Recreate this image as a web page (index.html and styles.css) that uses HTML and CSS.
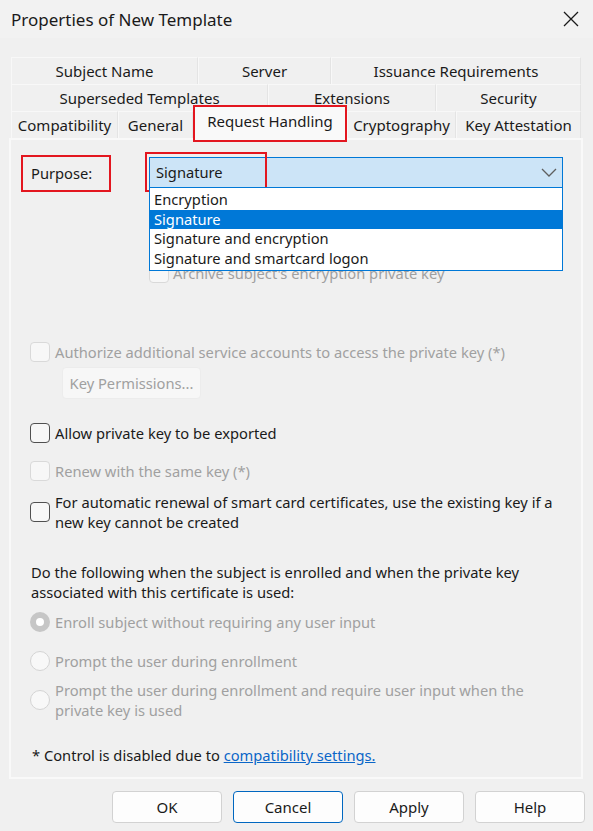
FILE: index.html
```html
<!DOCTYPE html>
<html>
<head>
<meta charset="utf-8">
<title>Properties of New Template</title>
<link rel="stylesheet" href="styles.css">
</head>
<body>
<div class="window">
  <div class="titlebar">
    <span class="title">Properties of New Template</span>
    <svg class="close" width="16" height="16" viewBox="0 0 16 16"><path d="M1 1 L15 15 M15 1 L1 15" stroke="#1a1a1a" stroke-width="1.3" fill="none"/></svg>
  </div>
  <div class="main">
    <div class="tabs">
      <div class="tabrow">
        <div class="tab t-subject">Subject Name</div>
        <div class="tab t-server">Server</div>
        <div class="tab t-issuance">Issuance Requirements</div>
      </div>
      <div class="tabrow">
        <div class="tab t-superseded">Superseded Templates</div>
        <div class="tab t-extensions">Extensions</div>
        <div class="tab t-security">Security</div>
      </div>
      <div class="tabrow">
        <div class="tab t-compat">Compatibility</div>
        <div class="tab t-general">General</div>
        <div class="tab tab-active t-request">Request Handling</div>
        <div class="tab t-crypto">Cryptography</div>
        <div class="tab t-attest">Key Attestation</div>
      </div>
    </div>
    <div class="panel">
      <div class="purpose-row">
        <div class="purpose-label">Purpose:</div>
        <div class="combo">
          <span class="combo-value">Signature</span>
          <svg class="chevron" width="16" height="9" viewBox="0 0 16 9"><path d="M1 1 L8 8 L15 1" stroke="#5f5f5f" stroke-width="1.3" fill="none"/></svg>
          <div class="annot-box"></div>
          <ul class="dropdown">
            <li>Encryption</li>
            <li class="selected">Signature</li>
            <li>Signature and encryption</li>
            <li>Signature and smartcard logon</li>
          </ul>
        </div>
      </div>

      <div class="check-row archive disabled">
        <span class="box"></span>
        <span class="label">Archive subject's encryption private key</span>
      </div>

      <div class="check-row authorize disabled">
        <span class="box"></span>
        <span class="label">Authorize additional service accounts to access the private key (*)</span>
      </div>
      <button class="keyperm" disabled>Key Permissions...</button>

      <div class="check-row allow">
        <span class="box"></span>
        <span class="label">Allow private key to be exported</span>
      </div>

      <div class="check-row renew disabled">
        <span class="box"></span>
        <span class="label">Renew with the same key (*)</span>
      </div>

      <div class="check-row auto">
        <span class="box"></span>
        <span class="label">For automatic renewal of smart card certificates, use the existing key if a new key cannot be created</span>
      </div>

      <p class="instructions">Do the following when the subject is enrolled and when the private key associated with this certificate is used:</p>

      <div class="radio-row enroll disabled">
        <span class="radio checked"></span>
        <span class="label">Enroll subject without requiring any user input</span>
      </div>
      <div class="radio-row prompt disabled">
        <span class="radio"></span>
        <span class="label">Prompt the user during enrollment</span>
      </div>
      <div class="radio-row prompt2 disabled">
        <span class="radio"></span>
        <span class="label">Prompt the user during enrollment and require user input when the private key is used</span>
      </div>

      <p class="footnote">* Control is disabled due to <a href="#">compatibility settings.</a></p>
    </div>
    <div class="buttons">
      <button class="btn">OK</button>
      <button class="btn btn-focus">Cancel</button>
      <button class="btn">Apply</button>
      <button class="btn">Help</button>
    </div>
  </div>
</div>
</body>
</html>
```
FILE: styles.css
```css
* { box-sizing: border-box; }

html, body {
  margin: 0;
  padding: 0;
}

body {
  background: #f0f0f0;
  font-family: "Noto Sans", "Open Sans", sans-serif;
  font-size: 14.7px;
  color: #1a1a1a;
  width: 593px;
  height: 831px;
  overflow: hidden;
}

.window {
  width: 593px;
  height: 831px;
}

.titlebar {
  height: 38px;
  display: flex;
  align-items: center;
  justify-content: space-between;
  padding: 0 14px 0 11px;
  background: #f2f2f2;
}

.title {
  font-size: 17px;
  color: #1a1a1a;
}

.close {
  display: block;
}

.main {
  padding: 19px 10px 0 9px;
}

.tabs {
  margin: 0 2px;
  width: 570px;
  font-size: 15px;
}

.tabrow {
  display: flex;
  height: 27px;
}

.tab {
  display: flex;
  align-items: center;
  justify-content: center;
  background: #f0f0f0;
  border-top: 1px solid #f8f8f8;
  border-left: 1px solid #f8f8f8;
  border-right: 1px solid #e4e4e4;
  white-space: nowrap;
}

.t-subject { width: 187px; }
.t-server { width: 133px; }
.t-issuance { width: 250px; }
.t-superseded { width: 257px; }
.t-extensions { width: 168px; }
.t-security { width: 145px; }
.t-compat { width: 107px; }
.t-general { width: 75px; }
.t-request { width: 154px; }
.t-crypto { width: 109px; }
.t-attest { width: 125px; }

.tab-active {
  position: relative;
  z-index: 2;
  background: #f9f9f9;
  border: 2px solid #e3161f;
  margin-top: -6px;
  margin-bottom: -4px;
  height: 37px;
  padding: 0 0 6px 0;
}

.panel {
  position: relative;
  z-index: 1;
  width: 574px;
  height: 641px;
  background: #f0f0f0;
  border: 2px solid #f9f9f9;
  padding: 15px 10px 0 19px;
}

.purpose-row {
  display: flex;
  align-items: flex-start;
  margin-left: -9px;
}

.purpose-label {
  width: 90px;
  height: 37px;
  border: 2px solid #e3161f;
  padding-left: 8px;
  padding-bottom: 2px;
  display: flex;
  align-items: center;
}

.combo {
  position: relative;
  margin-left: 38px;
  margin-top: 2px;
  width: 414px;
  height: 31px;
  background: #cce4f7;
  border: 1px solid #0078d7;
  padding-left: 6px;
  padding-bottom: 1px;
  display: flex;
  align-items: center;
  justify-content: space-between;
}

.chevron {
  margin-right: 5px;
}

.annot-box {
  position: absolute;
  left: -5px;
  top: -6px;
  width: 122px;
  height: 40px;
  border: 2px solid #e3161f;
}

.dropdown {
  position: absolute;
  top: 100%;
  left: -1px;
  right: -1px;
  margin: 0;
  padding: 2px 0;
  list-style: none;
  background: #ffffff;
  border: 1px solid #0078d7;
  z-index: 3;
}

.dropdown li {
  height: 19.5px;
  line-height: 19px;
  padding-left: 4px;
  color: #1a1a1a;
}

.dropdown li.selected {
  background: #0078d7;
  color: #ffffff;
}

.check-row, .radio-row {
  display: flex;
  align-items: center;
  line-height: 20px;
}

.box {
  flex: none;
  width: 20px;
  height: 20px;
  border: 1px solid #505050;
  border-radius: 4px;
  background: #f7f7f7;
  margin-right: 5px;
}

.disabled .label { color: #a0a0a0; }

.disabled .box {
  border-color: #d9d9d9;
  background: #f7f7f7;
}

.archive {
  margin-top: 71px;
  margin-left: 119px;
}

.archive .box { margin-right: 4px; }

.authorize { margin-top: 59px; }

.keyperm {
  display: block;
  margin: 5px 0 0 32px;
  width: 139px;
  height: 32px;
  border: 1px solid #ececec;
  border-radius: 4px;
  background: #f7f7f7;
  color: #a0a0a0;
  font-family: inherit;
  font-size: 14.7px;
  padding: 0;
}

.allow { margin-top: 24px; }
.renew { margin-top: 18px; }
.auto { margin-top: 11px; }
.auto .label { width: 520px; }

.instructions {
  margin: 31px 0 0 1px;
  line-height: 19.5px;
  width: 520px;
}

.radio {
  flex: none;
  width: 20px;
  height: 20px;
  border-radius: 50%;
  border: 1px solid #d4d4d4;
  background: #f8f8f8;
  margin-right: 5px;
}

.radio.checked {
  border: 6px solid #c6c6c6;
  background: #ffffff;
}

.enroll { margin-top: 10px; }
.prompt { margin-top: 19px; }
.prompt2 { margin-top: 9px; }
.prompt2 .label { width: 490px; }

.footnote {
  margin: 25px 0 0 2px;
  line-height: 20px;
}

.footnote a {
  color: #0a66c8;
  text-decoration: underline;
}

.buttons {
  display: flex;
  justify-content: flex-end;
  gap: 11px;
  margin-top: 12px;
  margin-right: -2px;
}

.btn {
  width: 110px;
  height: 32px;
  background: #fdfdfd;
  border: 1px solid #d2d2d2;
  border-radius: 4px;
  font-family: inherit;
  font-size: 15px;
  color: #1a1a1a;
  padding: 0;
}

.btn-focus {
  border-color: #0067c0;
}
```
